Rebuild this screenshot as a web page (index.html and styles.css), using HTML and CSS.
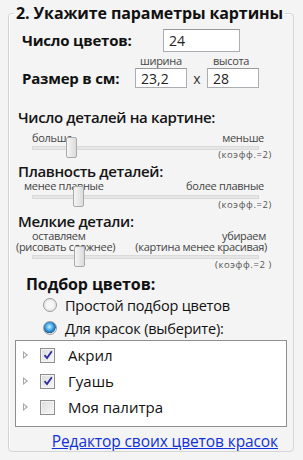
FILE: index.html
```html
<!DOCTYPE html>
<html lang="ru">
<head>
    <meta charset="UTF-8">
    <title>Параметры картины</title>
    <link rel="stylesheet" href="styles.css">
</head>
<body>
    <fieldset class="panel">
        <legend class="panel-title">2. Укажите параметры картины</legend>

        <div class="field-row colors-row">
            <span class="field-label">Число цветов:</span>
            <input class="num-input colors-input" type="text" value="24">
        </div>

        <div class="size-captions">
            <span class="caption-w">ширина</span>
            <span class="caption-h">высота</span>
        </div>
        <div class="field-row size-row">
            <span class="field-label">Размер в см:</span>
            <input class="num-input size-input" type="text" value="23,2">
            <span class="times">x</span>
            <input class="num-input size-input" type="text" value="28">
        </div>

        <div class="section-title first">Число деталей на картине:</div>
        <div class="slider detail">
            <div class="slider-ends">
                <span>больше</span>
                <span>меньше</span>
            </div>
            <div class="track"><div class="thumb" style="left: 33px"></div></div>
            <div class="coeff">(коэфф.=2)</div>
        </div>

        <div class="section-title">Плавность деталей:</div>
        <div class="slider smooth">
            <div class="slider-ends">
                <span>менее плавные</span>
                <span>более плавные</span>
            </div>
            <div class="track"><div class="thumb" style="left: 40px"></div></div>
            <div class="coeff">(коэфф.=2)</div>
        </div>

        <div class="section-title">Мелкие детали:</div>
        <div class="slider small">
            <div class="slider-ends">
                <div class="end-l">
                    <div class="line-a">оставляем</div>
                    <div>(рисовать сложнее)</div>
                </div>
                <div class="end-r">
                    <div class="line-a">убираем</div>
                    <div>(картина менее красивая)</div>
                </div>
            </div>
            <div class="track"><div class="thumb" style="left: 41px"></div></div>
            <div class="coeff">(коэфф.=2 )</div>
        </div>

        <div class="colors-title">Подбор цветов:</div>
        <div class="radio-list">
            <label class="radio-row"><span class="radio"></span>Простой подбор цветов</label>
            <label class="radio-row"><span class="radio checked"></span>Для красок (выберите):</label>
        </div>

        <div class="tree">
            <div class="tree-row">
                <span class="expander"></span>
                <span class="check">
                    <svg viewBox="0 0 10 10" width="10" height="10"><path d="M1.5 5.2 L4 8 L8.8 1.2" fill="none" stroke="#2f2b9e" stroke-width="1.8"/></svg>
                </span>
                <span class="tree-text">Акрил</span>
            </div>
            <div class="tree-row">
                <span class="expander"></span>
                <span class="check">
                    <svg viewBox="0 0 10 10" width="10" height="10"><path d="M1.5 5.2 L4 8 L8.8 1.2" fill="none" stroke="#2f2b9e" stroke-width="1.8"/></svg>
                </span>
                <span class="tree-text">Гуашь</span>
            </div>
            <div class="tree-row">
                <span class="expander"></span>
                <span class="check"></span>
                <span class="tree-text">Моя палитра</span>
            </div>
        </div>

        <div class="link-row">
            <a href="#" class="editor-link">Редактор своих цветов красок</a>
        </div>
    </fieldset>
</body>
</html>
```

FILE: styles.css
```css
:root {
    --background: #f4f4f4;
    --text: #111111;
    --muted: #444444;
    --border: #d5d5d5;
    --input-border: #abadb3;
    --link: #1030d8;
}

body {
    background: var(--background);
    color: var(--text);
    font-family: "Open Sans", "Noto Sans", sans-serif;
    margin: 0;
    padding: 0;
}

/* group box */
.panel {
    margin: 4px 9px 0 8px;
    padding: 0 0 1px 0;
    border: 1px solid var(--border);
    border-radius: 4px;
    box-shadow: inset 1px 1px 0 #fff;
}

.panel-title {
    font-size: 16px;
    font-weight: bold;
    line-height: 18px;
    height: 18px;
    padding: 0 2px;
    margin-left: 5px;
    letter-spacing: -0.1px;
}

.field-row {
    display: flex;
    align-items: center;
    padding-left: 13px;
}

.field-label {
    font-size: 15px;
    font-weight: bold;
    letter-spacing: -0.2px;
}

.colors-row {
    margin-top: 7px;
    height: 22px;
}

.colors-row .field-label {
    width: 141px;
}

.num-input {
    font-family: inherit;
    font-size: 14px;
    color: #222;
    border: 1px solid var(--input-border);
    border-top-color: #9a9a9a;
    background: #fff;
    margin: 0;
    padding: 0 5px;
    box-sizing: border-box;
    outline: none;
}

.colors-input {
    width: 77px;
    height: 23px;
}

.size-captions {
    position: relative;
    height: 12px;
    margin-top: 4px;
    font-size: 11px;
    line-height: 12px;
    color: var(--muted);
    letter-spacing: -0.3px;
}

.caption-w {
    position: absolute;
    left: 131px;
}

.caption-h {
    position: absolute;
    left: 204px;
}

.size-row {
    margin-top: 1px;
    height: 20px;
}

.size-row .field-label {
    width: 113px;
}

.size-input {
    width: 52px;
    height: 20px;
}

.times {
    width: 20px;
    text-align: center;
    font-size: 14px;
    color: #333;
}

/* sliders */
.section-title {
    font-size: 15px;
    font-weight: 600;
    line-height: 18px;
    height: 18px;
    padding-left: 9px;
    margin-top: 2px;
    letter-spacing: -0.35px;
    color: #151515;
}

.section-title.first {
    margin-top: 20px;
}

.slider {
    padding: 0 20px 0 7px;
}

.slider-ends {
    display: flex;
    justify-content: space-between;
    font-size: 11px;
    line-height: 12px;
    height: 12px;
    color: var(--muted);
    letter-spacing: -0.3px;
    padding-right: 9px;
}

.detail .slider-ends {
    margin-top: 6px;
    padding-left: 16px;
}

.smooth .slider-ends {
    padding-left: 8px;
}

.small .slider-ends {
    height: 22px;
    line-height: 11px;
    padding-right: 6px;
}

.small .end-l .line-a {
    padding-left: 16px;
}

.small .end-r {
    text-align: right;
}

.small .end-r .line-a {
    padding-right: 1px;
}

.track {
    position: relative;
    height: 2px;
    margin: 2px 14px 0 16px;
    border: 1px solid #d9d9d9;
    background: #e6e6e6;
}

.small .track,
.smooth .track {
    margin-top: 3px;
}

.thumb {
    position: absolute;
    top: -10px;
    width: 9px;
    height: 19px;
    border: 1px solid #a9a9a9;
    border-radius: 2px;
    background: linear-gradient(to right, #f5f5f5, #dcdcdc);
}

.coeff {
    text-align: right;
    font-size: 9.5px;
    line-height: 10px;
    height: 10px;
    color: #555;
    margin-top: 0;
    letter-spacing: 0.6px;
    padding-right: 1px;
}

.smooth .coeff,
.small .coeff {
    margin-top: 1px;
}

/* colour choice */
.colors-title {
    font-size: 16px;
    font-weight: bold;
    line-height: 20px;
    height: 20px;
    padding-left: 17px;
    margin-top: 4px;
    letter-spacing: -0.1px;
}

.radio-list {
    display: flex;
    flex-direction: column;
    gap: 7px;
    padding-left: 34px;
    margin-top: 3px;
}

.radio-row {
    display: flex;
    align-items: center;
    gap: 8px;
    height: 16px;
    font-size: 14.5px;
    letter-spacing: -0.2px;
}

.radio {
    width: 12px;
    height: 12px;
    border-radius: 50%;
    border: 1px solid #9c9c9c;
    background: radial-gradient(circle, #f6f6f6 35%, #d8d8d8 100%);
}

.radio.checked {
    background: radial-gradient(circle at 45% 40%, #c9efff 0, #3aa0e6 40%, #1b5e9e 62%, #e8e8e8 68%, #f2f2f2 100%);
}

.tree {
    margin: 4px 6px 0 6px;
    border: 1px solid #8e8f8f;
    background: #fff;
    height: 87px;
    box-sizing: border-box;
    padding-top: 1px;
}

.tree-row {
    display: flex;
    align-items: center;
    height: 26px;
    padding-left: 7px;
}

.expander {
    position: relative;
    width: 0;
    height: 0;
    border-left: 5px solid #a6a6a6;
    border-top: 4px solid transparent;
    border-bottom: 4px solid transparent;
    margin-right: 12px;
}

.expander::after {
    content: "";
    position: absolute;
    left: -4px;
    top: -2px;
    border-left: 2px solid #fff;
    border-top: 2px solid transparent;
    border-bottom: 2px solid transparent;
}

.check {
    width: 15px;
    height: 15px;
    border: 1px solid #8f8f8f;
    background: linear-gradient(135deg, #dcdcdc, #f8f8f8);
    box-shadow: inset 0 0 0 1px #f4f4f4;
    display: flex;
    align-items: center;
    justify-content: center;
    box-sizing: border-box;
}

.tree-text {
    font-size: 15px;
    margin-left: 13px;
}

.link-row {
    height: 18px;
    line-height: 18px;
    margin-top: 5px;
    text-align: right;
    padding-right: 15px;
}

.editor-link {
    font-size: 15.5px;
    color: var(--link);
    letter-spacing: -0.1px;
}
```
